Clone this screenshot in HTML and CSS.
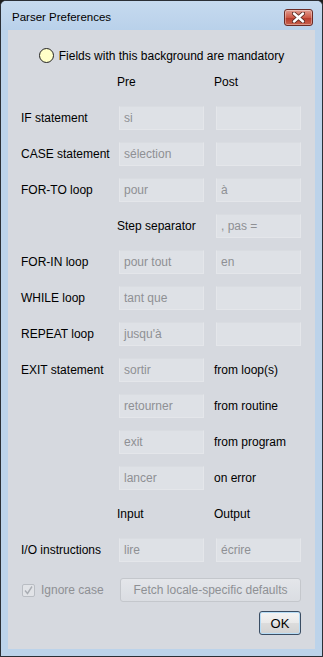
FILE: index.html
```html
<!DOCTYPE html>
<html lang="en">
<head>
	<meta charset="UTF-8" />
	<title>Parser Preferences</title>
	<link rel="stylesheet" href="styles.css">
</head>
<body>
<div class="window">
	<div class="titlebar">
		<span class="title">Parser Preferences</span>
		<span class="close">
			<svg width="13" height="11" viewBox="0 0 13 11">
				<path d="M2 1.5 L11 9.5 M11 1.5 L2 9.5" stroke="#5a2a22" stroke-width="4.2" stroke-linecap="round"/>
				<path d="M2 1.5 L11 9.5 M11 1.5 L2 9.5" stroke="#ffffff" stroke-width="2.4" stroke-linecap="round"/>
			</svg>
		</span>
	</div>
	<div class="content">
		<div class="legend"><span class="dot"></span>Fields with this background are mandatory</div>

		<div class="grid">
			<span></span><span class="head">Pre</span><span class="head">Post</span>

			<span class="label">IF statement</span><span class="field">si</span><span class="field"></span>
			<span class="label">CASE statement</span><span class="field">sélection</span><span class="field"></span>
			<span class="label">FOR-TO loop</span><span class="field">pour</span><span class="field">à</span>
			<span></span><span class="head">Step separator</span><span class="field">, pas =</span>
			<span class="label">FOR-IN loop</span><span class="field">pour tout</span><span class="field">en</span>
			<span class="label">WHILE loop</span><span class="field">tant que</span><span class="field"></span>
			<span class="label">REPEAT loop</span><span class="field">jusqu'à</span><span class="field"></span>
			<span class="label">EXIT statement</span><span class="field">sortir</span><span class="head">from loop(s)</span>
			<span></span><span class="field">retourner</span><span class="head">from routine</span>
			<span></span><span class="field">exit</span><span class="head">from program</span>
			<span></span><span class="field">lancer</span><span class="head">on error</span>

			<span></span><span class="head">Input</span><span class="head">Output</span>
			<span class="label">I/O instructions</span><span class="field">lire</span><span class="field">écrire</span>
		</div>

		<div class="options">
			<label class="check">
				<span class="box">
					<svg width="11" height="11" viewBox="0 0 11 11">
						<path d="M2 5.5 L4.5 8.5 L9 1.5" fill="none" stroke="#a9adb3" stroke-width="1.4"/>
					</svg>
				</span>
				Ignore case
			</label>
			<button class="btn-fetch">Fetch locale-specific defaults</button>
		</div>

		<div class="footer">
			<button class="btn-ok">OK</button>
		</div>
	</div>
</div>
</body>
</html>
```

FILE: styles.css
```css
body {
	margin: 0;
	font-family: "Liberation Sans", Arial, sans-serif;
	font-size: 12px;
	background: #1e1e1e;
}
.window {
	width: 321px;
	height: 655px;
	border: 1px solid #2a2f36;
	border-radius: 6px 6px 0 0;
	background: #bcd3ea;
	display: flex;
	flex-direction: column;
}
.titlebar {
	height: 29px;
	display: flex;
	align-items: center;
	justify-content: space-between;
	padding: 0 9px 0 11px;
	border-radius: 5px 5px 0 0;
	background: linear-gradient(#c6daef, #b9d1ea);
}
.title {
	font-size: 11.5px;
	color: #000;
	margin-top: 3px;
}
.close {
	width: 27px;
	height: 15px;
	border: 1px solid #6b2b25;
	border-radius: 3px;
	margin-top: 3px;
	background: linear-gradient(#e29d91, #cd5a47 50%, #b6392a 51%, #c9624d);
	display: flex;
	align-items: center;
	justify-content: center;
	box-shadow: inset 0 0 0 1px rgba(255, 255, 255, 0.35);
}
.content {
	flex: 1;
	margin: 0 7px 7px;
	background: #d6d9df;
	padding: 18px 0 0 12px;
	color: #000;
}
.legend {
	display: flex;
	align-items: center;
	justify-content: center;
	height: 15px;
	padding-right: 12px;
	gap: 5px;
	font-size: 12px;
}
.dot {
	width: 13px;
	height: 13px;
	border: 1px solid #222;
	border-radius: 50%;
	background: #ffffc8;
}
.grid {
	display: grid;
	grid-template-columns: 87px 85px 85px;
	grid-auto-rows: 24px;
	column-gap: 12px;
	row-gap: 12px;
	margin-top: 7px;
}
.grid span {
	display: flex;
	align-items: center;
	white-space: nowrap;
}
.label {
	padding-left: 1px;
}
.head {
	margin-left: -2px;
}
.field {
	box-sizing: border-box;
	padding: 0 4px;
	background: #dee1e6;
	border: 1px solid #e4e6ea;
	border-top-color: #d9dce1;
	color: #8e9094;
}
.options {
	display: flex;
	align-items: center;
	margin-top: 16px;
	height: 24px;
}
.check {
	display: flex;
	align-items: center;
	gap: 6px;
	width: 98px;
	padding-left: 2px;
	color: #8e9094;
}
.box {
	width: 11px;
	height: 11px;
	border: 1px solid #b9bdc3;
	border-radius: 2px;
	background: #e1e3e7;
	display: flex;
	align-items: center;
	justify-content: center;
}
.btn-fetch {
	width: 181px;
	height: 24px;
	font-family: inherit;
	font-size: 12px;
	color: #8e9094;
	border: 1px solid #c4c7cc;
	border-radius: 3px;
	background: linear-gradient(#e4e6ea, #dadde2);
	padding: 0;
}
.footer {
	display: flex;
	justify-content: flex-end;
	margin-top: 9px;
	padding-right: 14px;
}
.btn-ok {
	width: 42px;
	height: 24px;
	font-family: inherit;
	font-size: 13px;
	color: #000;
	border: 1px solid #3a4d63;
	border-radius: 3px;
	background: linear-gradient(#f4f4f4, #e9e9e9 50%, #dcdcdc 51%, #d2d2d2);
	box-shadow: inset 0 0 0 1px #b6dcf6;
	padding: 0;
}
```
